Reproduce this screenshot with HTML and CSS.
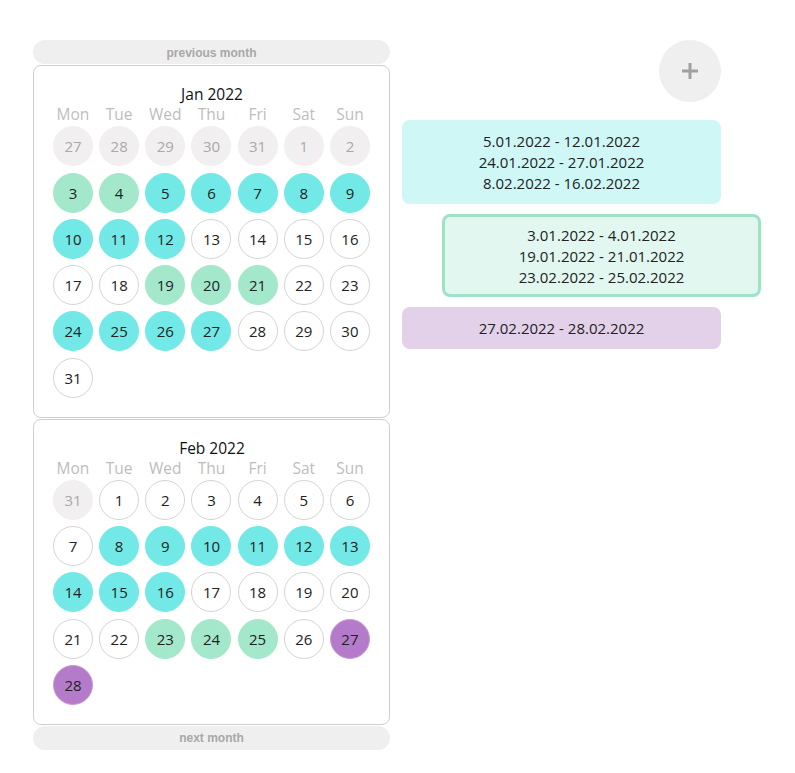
FILE: index.html
```html
<!DOCTYPE html>
<html>
<head>
<meta charset="utf-8">
<link rel="stylesheet" href="styles.css">
</head>
<body>
<div class="page">
  <div class="left">
    <button class="nav-btn">previous month</button>
    <div class="month">
      <div class="title">Jan 2022</div>
      <div class="grid">
        <span class="wd">Mon</span><span class="wd">Tue</span><span class="wd">Wed</span><span class="wd">Thu</span><span class="wd">Fri</span><span class="wd">Sat</span><span class="wd">Sun</span>
        <span class="day other">27</span><span class="day other">28</span><span class="day other">29</span><span class="day other">30</span><span class="day other">31</span><span class="day other">1</span><span class="day other">2</span>
        <span class="day green">3</span><span class="day green">4</span><span class="day cyan">5</span><span class="day cyan">6</span><span class="day cyan">7</span><span class="day cyan">8</span><span class="day cyan">9</span>
        <span class="day cyan">10</span><span class="day cyan">11</span><span class="day cyan">12</span><span class="day">13</span><span class="day">14</span><span class="day">15</span><span class="day">16</span>
        <span class="day">17</span><span class="day">18</span><span class="day green">19</span><span class="day green">20</span><span class="day green">21</span><span class="day">22</span><span class="day">23</span>
        <span class="day cyan">24</span><span class="day cyan">25</span><span class="day cyan">26</span><span class="day cyan">27</span><span class="day">28</span><span class="day">29</span><span class="day">30</span>
        <span class="day">31</span>
      </div>
    </div>
    <div class="month">
      <div class="title">Feb 2022</div>
      <div class="grid">
        <span class="wd">Mon</span><span class="wd">Tue</span><span class="wd">Wed</span><span class="wd">Thu</span><span class="wd">Fri</span><span class="wd">Sat</span><span class="wd">Sun</span>
        <span class="day other">31</span><span class="day">1</span><span class="day">2</span><span class="day">3</span><span class="day">4</span><span class="day">5</span><span class="day">6</span>
        <span class="day">7</span><span class="day cyan">8</span><span class="day cyan">9</span><span class="day cyan">10</span><span class="day cyan">11</span><span class="day cyan">12</span><span class="day cyan">13</span>
        <span class="day cyan">14</span><span class="day cyan">15</span><span class="day cyan">16</span><span class="day">17</span><span class="day">18</span><span class="day">19</span><span class="day">20</span>
        <span class="day">21</span><span class="day">22</span><span class="day green">23</span><span class="day green">24</span><span class="day green">25</span><span class="day">26</span><span class="day purple">27</span>
        <span class="day purple">28</span>
      </div>
    </div>
    <button class="nav-btn">next month</button>
  </div>
  <div class="right">
    <button class="add-btn" aria-label="add">
      <svg width="18" height="18" viewBox="0 0 18 18"><path d="M9 1v16M1 9h16" stroke="#a0a0a0" stroke-width="3" fill="none"/></svg>
    </button>
    <div class="range range-cyan">5.01.2022 - 12.01.2022<br>24.01.2022 - 27.01.2022<br>8.02.2022 - 16.02.2022</div>
    <div class="range range-green selected">3.01.2022 - 4.01.2022<br>19.01.2022 - 21.01.2022<br>23.02.2022 - 25.02.2022</div>
    <div class="range range-purple">27.02.2022 - 28.02.2022</div>
  </div>
</div>
</body>
</html>
```

FILE: styles.css
```css
* { box-sizing: border-box; }
body {
  margin: 0;
  background: #fff;
  font-family: "Open Sans", "Noto Sans", sans-serif;
  color: #222;
}
.page {
  display: flex;
  align-items: flex-start;
  gap: 12px;
  padding: 40px 0 0 33px;
}
.left {
  width: 357px;
  display: flex;
  flex-direction: column;
}
.nav-btn {
  height: 24px;
  width: 100%;
  border: none;
  border-radius: 12px;
  background: #efefef;
  color: #a8a8a8;
  font-family: "Liberation Sans", Arial, sans-serif;
  font-weight: bold;
  font-size: 12px;
  padding: 1px 0 0;
  margin: 0;
}
.nav-btn:first-child { margin-bottom: 1px; }
.nav-btn:last-child { margin-top: 1px; }
.month {
  border: 1px solid #cfcfcf;
  border-radius: 8px;
  padding: 18px 19px 19px 19px;
}
.month + .month { margin-top: 1px; }
.title {
  text-align: center;
  font-size: 15.5px;
  line-height: 20px;
  color: #111;
  padding-left: 1px;
}
.grid {
  display: grid;
  grid-template-columns: repeat(7, 40px);
  justify-content: space-between;
  row-gap: 6.25px;
}
.wd {
  text-align: center;
  font-size: 15.5px;
  line-height: 20px;
  color: #bdbdbd;
  margin-bottom: -4px;
  white-space: nowrap;
}
.day {
  width: 40px;
  height: 40px;
  border-radius: 50%;
  border: 1px solid #d4d4d4;
  display: flex;
  align-items: center;
  justify-content: center;
  font-size: 15px;
  color: #222;
}
.day.other { background: #f1eff0; border-color: #f1eff0; color: #a9a9a9; }
.day.cyan { background: #72e9e6; border-color: #72e9e6; }
.day.green { background: #a4e8cc; border-color: #a4e8cc; }
.day.purple { background: #b47bcb; border-color: #c89ad8; }
.right {
  width: 319px;
  display: flex;
  flex-direction: column;
  align-items: flex-start;
}
.add-btn {
  align-self: flex-end;
  width: 62px;
  height: 62px;
  border-radius: 50%;
  border: none;
  background: #efefef;
  display: flex;
  align-items: center;
  justify-content: center;
  padding: 0;
  margin-bottom: 18px;
}
.range {
  width: 319px;
  border-radius: 8px;
  padding: 11px 10px 10px;
  text-align: center;
  font-size: 15px;
  line-height: 21px;
  color: #222;
  margin-bottom: 10px;
}
.range-cyan { background: #cff7f6; }
.range-green { background: #e1f7ef; }
.range-purple { background: #e3d1ea; }
.selected {
  border: 3px solid #9fe3c6;
  padding: 8px 7px 6px;
  margin-left: 40px;
}
```
